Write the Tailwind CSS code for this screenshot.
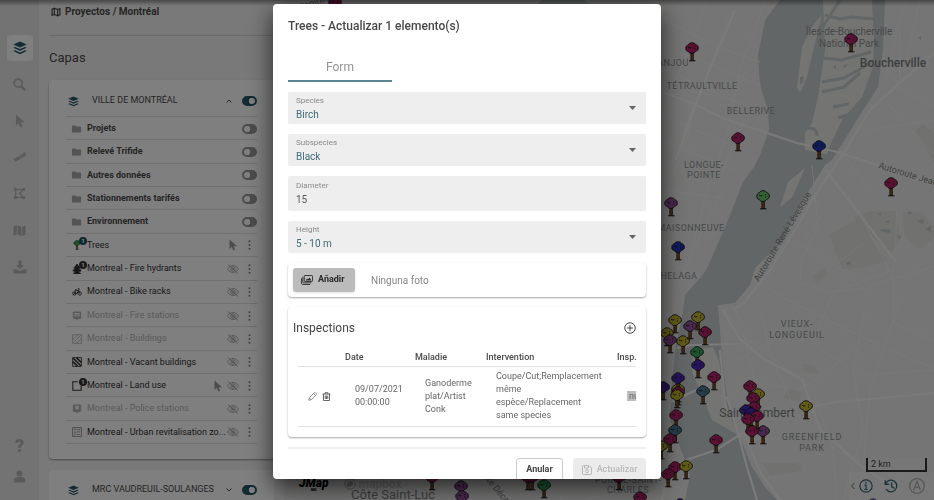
<!DOCTYPE html>
<html lang="es">
<head>
  <meta charset="UTF-8" />
  <meta name="viewport" content="width=device-width, initial-scale=1.0" />
  <title>Proyectos / Montréal</title>
  <script src="https://cdn.jsdelivr.net/npm/@tailwindcss/browser@4"></script>
</head>
<body class="relative flex h-screen overflow-hidden bg-[#eeeeee] font-['Roboto',sans-serif] text-[#4a4a4a]">

  <!-- icon sprite -->
  <svg class="hidden" aria-hidden="true">
    <symbol id="layers" viewBox="0 0 24 24"><path fill="currentColor" d="M12 1l11.500 5L12 11 .5 6zM3.500 10.200l8.500 3.700 8.500-3.700 3 1.400L12 16.700.5 11.600zM3.500 15.800l8.500 3.700 8.500-3.700 3 1.400L12 22.500.5 17.200z"/></symbol>
    <symbol id="search" viewBox="0 0 24 24"><circle cx="9.500" cy="9.500" r="7.500" fill="none" stroke="currentColor" stroke-width="3"/><path d="M15 15l7.500 7.500" stroke="currentColor" stroke-width="4"/></symbol>
    <symbol id="cursor" viewBox="0 0 24 24"><path fill="currentColor" d="M5 1v19l4.600-4.300L12.800 23l3.500-1.500-3.100-7.200H20z"/></symbol>
    <symbol id="ruler" viewBox="0 0 24 24"><path fill="currentColor" d="M1 15l2.500-1.400 1.500 2.700 1.400-.8L5 12.800l2.200-1.300 1 1.800 1.400-.8-1-1.800 2.200-1.300 1.500 2.700 1.400-.8-1.500-2.700 2.200-1.300 1 1.800 1.400-.8-1-1.800L20 4l3 5.200L4 20.200z"/></symbol>
    <symbol id="polygon" viewBox="0 0 24 24"><path fill="none" stroke="currentColor" stroke-width="2.200" d="M5 5h14l-6.500 7L19 19H5z"/><path fill="currentColor" d="M2 2h5v5H2zM17 2h5v5h-5zM2 17h5v5H2zM17 17h5v5h-5z"/></symbol>
    <symbol id="map" viewBox="0 0 24 24"><path fill="currentColor" d="M1 5l6-2.500v17L1 22zM8.500 2.500l7 2.500v17l-7-2.500zM17 5l6-2.500v17L17 22z"/></symbol>
    <symbol id="map-outline" viewBox="0 0 24 24"><path fill="none" stroke="currentColor" stroke-width="3" d="M2.500 5L8 3l8 3 5.500-2.200V19L16 21l-8-3-5.500 2.200zM8 3v15M16 6v15"/></symbol>
    <symbol id="download" viewBox="0 0 24 24"><path fill="currentColor" d="M9.500 1h5v8H19l-7 7-7-7h4.500zM1 16h6l3.500 3h3l3.500-3h6v7H1z"/></symbol>
    <symbol id="user" viewBox="0 0 24 24"><circle cx="12" cy="6.500" r="5.500" fill="currentColor"/><path fill="currentColor" d="M1.500 23v-3.500c0-4 3-6.500 6.500-6.500h8c3.500 0 6.500 2.500 6.500 6.500V23z"/></symbol>
    <symbol id="folder" viewBox="0 0 24 20"><path fill="currentColor" d="M2 1h7l3 3h10a1.500 1.500 0 0 1 1.500 1.500v12A1.500 1.500 0 0 1 22 19H2a1.500 1.500 0 0 1-1.500-1.500v-15A1.500 1.500 0 0 1 2 1z"/></symbol>
    <symbol id="eye-off" viewBox="0 0 24 20"><g fill="none" stroke="currentColor" stroke-width="1.500"><path d="M1 10c3-5 7-7 11-7s8 2 11 7c-3 5-7 7-11 7S4 15 1 10z"/><circle cx="12" cy="10" r="4.500"/><circle cx="12" cy="10" r="1.500"/><path d="M2 1l20 18"/></g></symbol>
    <symbol id="dots" viewBox="0 0 6 24"><g fill="currentColor"><circle cx="3" cy="3" r="2.400"/><circle cx="3" cy="12" r="2.400"/><circle cx="3" cy="21" r="2.400"/></g></symbol>
    <symbol id="hydrant" viewBox="0 0 24 24"><path fill="currentColor" d="M10 0h4v3c3 1 4 3 4 5h2v3h-2v2h4v5h-4v3h3v3H3v-3h3v-3H2v-5h4v-2H4V8h2c0-2 1-4 4-5z"/></symbol>
    <symbol id="bike" viewBox="0 0 24 20"><g fill="none" stroke="currentColor" stroke-width="2.200"><circle cx="5.500" cy="13.500" r="4"/><circle cx="18.500" cy="13.500" r="4"/><path d="M5.500 13.500L9 6h7l-4 7.500zM16 6l2.500 7.500M14.500 2H17l-1 4M7 4.500h4"/></g></symbol>
    <symbol id="station" viewBox="0 0 24 24"><path fill="currentColor" d="M4 1h16a2 2 0 0 1 2 2v14a2 2 0 0 1-2 2h-5l-3 4-3-4H4a2 2 0 0 1-2-2V3a2 2 0 0 1 2-2z"/><path fill="#fff" d="M6 5h12v8H6z"/><path fill="currentColor" d="M9 8h6v3H9z"/></symbol>
    <symbol id="police" viewBox="0 0 24 24"><path fill="currentColor" d="M4 1h16a2 2 0 0 1 2 2v14a2 2 0 0 1-2 2h-5l-3 4-3-4H4a2 2 0 0 1-2-2V3a2 2 0 0 1 2-2z"/><path fill="#fff" d="M8 4h8v7l-4 3-4-3z"/></symbol>
    <symbol id="hatch" viewBox="0 0 24 24"><path fill="none" stroke="currentColor" stroke-width="2" d="M1.500 1.500h21v21h-21zM2 14L14 2M4 20L20 4M11 22L22 11"/></symbol>
    <symbol id="hatch-bold" viewBox="0 0 24 24"><path fill="none" stroke="currentColor" stroke-width="2" d="M1.500 1.500h21v21h-21z"/><path fill="none" stroke="currentColor" stroke-width="4" d="M11 2l11 11M3 3l18 18M2 11l11 11"/></symbol>
    <symbol id="square" viewBox="0 0 24 24"><path fill="none" stroke="currentColor" stroke-width="2.500" d="M14 2H2v20h20V12"/></symbol>
    <symbol id="zone" viewBox="0 0 24 24"><g opacity=".6"><path fill="none" stroke="currentColor" stroke-width="2" d="M1.500 1.500h21v21h-21z"/><path fill="none" stroke="currentColor" stroke-width="1.500" d="M5 6h6M13 6h6M5 10h3M11 10h8M5 14h8M16 14h3M5 18h4M12 18h7"/></g></symbol>
    <symbol id="chevron-up" viewBox="0 0 12 8"><path fill="none" stroke="currentColor" stroke-width="2" d="M1 7l5-5 5 5"/></symbol>
    <symbol id="chevron-down" viewBox="0 0 12 8"><path fill="none" stroke="currentColor" stroke-width="2" d="M1 1l5 5 5-5"/></symbol>
    <symbol id="tree" viewBox="0 0 14 20">
      <path fill="#8a5220" stroke="#1a1a1a" stroke-width=".7" d="M5.800 10h2.600v8.500H5.800z"/>
      <path stroke="#1a1a1a" d="M4 18.800h6.500"/>
      <path fill="currentColor" stroke="#1a1a1a" stroke-width=".9" d="M7 .8c2 0 3.300.8 3.900 1.900 1.500.3 2.600 1.700 2.400 3.300.2 1.800-.9 2.900-2.400 3.100-1 1.800-2.600 2.500-4 2.400-1.600 0-3-.6-3.600-2C1.600 9.300.6 8 .8 6.200c-.1-1.700.9-3 2.400-3.300C4 1.400 5.300.8 7 .8z"/>
      <path fill="none" stroke="#1a1a1a" stroke-width=".9" d="M3 5l1.800 1 1.500-.5M9 5l1.200-.8M9.600 6.300v1.200"/>
    </symbol>
  </svg>

  <!-- sidebar -->
  <nav class="flex w-[39px] shrink-0 flex-col items-center justify-between bg-[#e6e6e6] pt-[30px] pb-2 text-[#b4b4b4]">
    <div class="flex h-[255px] flex-col">
      <button aria-label="Capas" class="flex flex-1 items-center justify-center"><span class="flex size-[26px] items-center justify-center rounded bg-white text-[#265868]"><svg class="size-[14px]"><use href="#layers"/></svg></span></button>
      <button aria-label="Buscar" class="flex flex-1 items-center justify-center"><svg class="size-[13px]"><use href="#search"/></svg></button>
      <button aria-label="Seleccionar" class="flex flex-1 items-center justify-center"><svg class="size-[14px]"><use href="#cursor"/></svg></button>
      <button aria-label="Medir" class="flex flex-1 items-center justify-center"><svg class="size-[14px]"><use href="#ruler"/></svg></button>
      <button aria-label="Anotar" class="flex flex-1 items-center justify-center"><svg class="size-[13px]"><use href="#polygon"/></svg></button>
      <button aria-label="Mapa base" class="flex flex-1 items-center justify-center"><svg class="size-[13px]"><use href="#map"/></svg></button>
      <button aria-label="Descargar" class="flex flex-1 items-center justify-center"><svg class="size-[14px]"><use href="#download"/></svg></button>
    </div>
    <div class="flex flex-col">
      <button aria-label="Ayuda" class="h-[31px] text-lg font-black">?</button>
      <button aria-label="Usuario" class="flex h-[31px] items-center justify-center"><svg class="size-[13px]"><use href="#user"/></svg></button>
    </div>
  </nav>

  <!-- layers panel -->
  <section class="flex w-[245px] shrink-0 flex-col overflow-hidden bg-[#f3f3f3] px-[10px]">
    <header class="flex h-9 shrink-0 items-start gap-1 border-b border-[#d2d2d2] pt-1 pl-[2px]">
      <svg class="mt-[3px] size-[10px]"><use href="#map-outline"/></svg>
      <h1 class="text-[10px] leading-4 font-bold">Proyectos / Montréal</h1>
    </header>
    <h2 class="flex h-11 shrink-0 items-center text-[13px]">Capas</h2>

    <article class="shrink-0 rounded bg-white px-[17px] pb-[15px] shadow-[0_1px_2px_rgba(0,0,0,0.4)]">
      <div class="flex h-[37px] items-center border-b border-[#dedede] pt-[6px] pl-[2px]">
        <svg class="size-[11px] text-[#265868]"><use href="#layers"/></svg>
        <h3 class="ml-[13px] flex-1 text-[9px]">VILLE DE MONTRÉAL</h3>
        <button aria-label="Contraer" class="mr-[10px]"><svg class="h-1 w-[6px]"><use href="#chevron-up"/></svg></button>
        <input type="checkbox" checked aria-label="Ville de Montréal" class="h-[10px] w-[15px] appearance-none rounded-full border-2 border-[#265868] bg-[radial-gradient(circle_at_8px_3px,#fff_3px,#265868_3px)]" />
      </div>
      <ul id="layers-list" class="flex h-[327px] flex-col text-[9px]"></ul>
    </article>

    <article class="mt-[11px] h-20 shrink-0 rounded bg-white px-[17px]">
      <div class="flex h-10 items-center pl-[2px]">
        <svg class="size-[11px] text-[#265868]"><use href="#layers"/></svg>
        <h3 class="ml-[13px] flex-1 text-[9px] whitespace-nowrap">MRC VAUDREUIL-SOULANGES</h3>
        <button aria-label="Expandir" class="mr-[10px]"><svg class="h-1 w-[6px]"><use href="#chevron-down"/></svg></button>
        <input type="checkbox" checked aria-label="MRC Vaudreuil-Soulanges" class="h-[10px] w-[15px] appearance-none rounded-full border-2 border-[#265868] bg-[radial-gradient(circle_at_8px_3px,#fff_3px,#265868_3px)]" />
      </div>
    </article>
  </section>

  <!-- map -->
  <main class="relative flex-1 overflow-hidden bg-[#ebebea]">
    <svg class="h-full w-full" viewBox="284 0 650 500" preserveAspectRatio="xMinYMin slice">
      <!-- parks and blocks -->
      <g fill="#e2e2e1">
        <path d="M829 235l28-16 31 42-22 6-24 2z"/>
        <path d="M854 217l15-6h27l4 25-8 17-34-28z"/>
        <path d="M903 212h18l13 14v12l-14 12-16-14z"/>
        <path d="M915 130l8-6 11 9v30z"/>
        <path d="M762 463h36l4 8-32 5z"/>
        <path d="M803 364l12 2 3 8-14-2zM783 398l7-12 12 6-4 10zM812 277l12-9 4 6-11 10z"/>
      </g>
      <!-- river -->
      <path fill="#c4cccc" d="M780 0l-15 20-7 35 2 30 8 25 1 20-9 25-6 12-11 15-13 33-20 47-5 10-20 23-2 17-7 33-4 35-2 40 13 35 7 20-5 25h92l-12-13-13-20-14-34-11-36-5-40-4-52 17-2 15-18 5-17 27-26 16-34 27-43 7-5 23-37 23-36 5-37 2-50z"/>
      <path fill="#c4cccc" d="M538 4h52l-14-8h-30z"/>
      <!-- islands -->
      <g fill="#e8e8e7">
        <path d="M823 0h49l2 40-1 27-11 30-20 23-14 30-1 4-22-4V133l7-10 6-26 7-47z"/>
        <path d="M822 14l-10 13-10 20-5 40 3 6 7-16 8-34z"/>
        <path d="M805 168l-17 14-8 25 12-9z"/>
        <path d="M693 350l-1 22 11 26 9 22 26 15-13-34-6-40-6-14z"/>
      </g>
      <g fill="none" stroke="#c4cccc" stroke-width="3">
        <path d="M825 15l15 4 12-2 22 2M823 58l18 2 30-8M822 82l22-4 18-10 12-8M822 92l22-5 16-14M833 107l16-3M838 118l10-3M808 128q10 0 9 8M840 0l-18 28"/>
      </g>
      <g fill="#c4cccc"><path d="M800 77l4-1-1 6-3 3zM918 38l3-2v4zM846 263l4-2 1 3-4 1zM878 214l3-1v3zM885 222l4-2v3zM881 229l10 1-2 3-9-2zM908 211l5 2-4 2zM916 221l8-2-1 5zM925 229l6-3v6zM898 235l3 1-2 5zM833 67l3-2v5zM843 66l5-2-3 4z"/></g>
      <!-- streets -->
      <g fill="none" stroke="#f3f3f2" stroke-width=".8">
        <path d="M662 20l70 32 28 10M662 45l85 35 14 4M662 68l60 28 38 15M662 115l50 22 34 14M662 140l72 30M662 190l62 8M662 215l55 20M662 260l40 18"/>
        <path d="M735 0l-32 85-41 100M708 0l-46 115M765 0l-25 70-12 60-22 65-16 60M690 130l-28 75M744 120l-25 60M722 190l-40 85-16 65M745 72l-20 42"/>
        <path d="M755 280l30 18 40 20 60 30 49 20M790 240l45 25 30 24 22-9 18-4 29-10M826 173l30 35 30 55 8 20v40l40 18M802 262l-2 20 30 10 36-4M897 210l-3 60-60 22-22 50M812 165l6 60-18 38M735 330l40 30 38 30 20 60 4 50M760 310l12 50 28 60 35 30 99 42M790 310l30 40 44 25 70-5M865 310l-12 60 10 60-20 70M900 300l-30 90-10 110M740 380l60 10 70-50M835 265l28-22M805 240l20-30M885 100l49 55M868 130l66-10M840 150l30 40M878 60l25 30 31 16M900 30v60M885 80l15-60 8-20M915 20l-10 50 29-18M920 0l-5 22"/>
        <path d="M725 310l18 24 12 48M732 305l16 28M722 345l42-3M738 360l22-12M745 440l34-2M760 430l30-30"/>
        <path d="M284 490l60-8 90 14 100-14 120 12M300 500l20-20M390 500l30-20M500 500l30-20M560 500l20-20M590 500l22-20M649 500l12-18"/>
      </g>
      <g fill="none" stroke="#f5f5f4" stroke-width="2.200">
        <path d="M662 92l28 10 35 17 72 24 45 10 92 32"/>
        <path d="M934 53l-30 26-34 31-22 36-36 54-14 25-28 45-27 34-10 6"/>
        <path d="M735 10l-34 80-25 70"/>
        <path d="M826 170l70 92M722 309l18 30 24 20 38 20 18 50 40 36 40 27M806 408l30-6 98-9"/>
        <path d="M677 348l14-3 47-1M671 402l42-20M686 460l30-10 28-18M727 397l12 40 8 30 10 33M720 350l6 60M744 432l16 40 20 28M676 460q-10 20-14 40"/>
      </g>

      <!-- place names -->
      <g class="font-['Roboto',sans-serif]" text-anchor="middle" fill="#8d9292">
        <g class="text-[10px]">
          <text x="849" y="35">Îles-de-Boucherville</text>
          <text x="849" y="47">National Park</text>
        </g>
        <g class="text-[9px] tracking-wider">
          <text x="673" y="66">ANJOU</text>
          <text x="702" y="89">TÉTRAULTVILLE</text>
          <text x="751" y="114">BELLERIVE</text>
          <text x="704" y="168">LONGUE-</text>
          <text x="704" y="178">POINTE</text>
          <text x="691" y="231">MAISONNEUVE</text>
          <text x="669" y="279">HOCHELAGA</text>
          <text x="628" y="483">POINTE-SAINT-</text>
          <text x="628" y="493">CHARLES</text>
        </g>
        <g class="text-[9px] tracking-widest">
          <text x="797" y="327">VIEUX-</text>
          <text x="797" y="338">LONGUEUIL</text>
          <text x="812" y="440">GREENFIELD</text>
          <text x="812" y="451">PARK</text>
        </g>
        <g class="text-[12px]" fill="#7a7d7d">
          <text x="893" y="67" class="font-medium">Boucherville</text>
          <text x="757" y="417">Saint-Lambert</text>
          <text x="393" y="499" class="text-[13px]">Côte Saint-Luc</text>
        </g>
        <g class="text-[9px]" fill="#808080">
          <text transform="translate(785 238) rotate(-59)">Autoroute René-Lévesque</text>
          <text text-anchor="start" transform="translate(878 168) rotate(17)">Autoroute Jean</text>
          <text transform="translate(494 490) rotate(50)">Route Décarie</text>
          <text transform="translate(318 4) rotate(-20)">Papineau</text>
        </g>
      </g>

      <!-- trees, grouped by state -->
      <g class="text-[#b52269]">
        <use href="#tree" x="328" y="-4" width="14" height="20"/>
        <use href="#tree" x="685" y="42" width="14" height="20"/>
        <use href="#tree" x="844" y="33" width="14" height="20"/>
        <use href="#tree" x="731" y="132" width="14" height="20"/>
        <use href="#tree" x="884" y="177" width="14" height="20"/>
        <use href="#tree" x="698" y="326" width="14" height="20"/>
        <use href="#tree" x="707" y="371" width="14" height="20"/>
        <use href="#tree" x="669" y="409" width="14" height="20"/>
        <use href="#tree" x="709" y="434" width="14" height="20"/>
        <use href="#tree" x="668" y="461" width="14" height="20"/>
        <use href="#tree" x="661" y="468" width="14" height="20"/>
        <use href="#tree" x="425" y="471" width="14" height="20"/>
        <use href="#tree" x="521" y="471" width="14" height="20"/>
        <use href="#tree" x="525" y="471" width="14" height="20"/>
        <use href="#tree" x="612" y="471" width="14" height="20"/>
        <use href="#tree" x="633" y="491" width="14" height="20"/>
        <use href="#tree" x="743" y="380" width="14" height="20"/>
      </g>
      <g class="text-[#c4b52e]">
        <use href="#tree" x="691" y="311" width="14" height="20"/>
        <use href="#tree" x="668" y="314" width="14" height="20"/>
        <use href="#tree" x="660" y="327" width="14" height="20"/>
        <use href="#tree" x="676" y="335" width="14" height="20"/>
        <use href="#tree" x="671" y="383" width="14" height="20"/>
        <use href="#tree" x="654" y="440" width="14" height="20"/>
        <use href="#tree" x="679" y="460" width="14" height="20"/>
        <use href="#tree" x="751" y="388" width="14" height="20"/>
        <use href="#tree" x="799" y="400" width="14" height="20"/>
      </g>
      <g class="text-[#96509c]">
        <use href="#tree" x="664" y="197" width="14" height="20"/>
        <use href="#tree" x="683" y="320" width="14" height="20"/>
        <use href="#tree" x="663" y="334" width="14" height="20"/>
        <use href="#tree" x="454" y="480" width="14" height="20"/>
        <use href="#tree" x="455" y="490" width="14" height="20"/>
        <use href="#tree" x="756" y="425" width="14" height="20"/>
      </g>
      <g class="text-[#2237b4]">
        <use href="#tree" x="812" y="140" width="14" height="20"/>
        <use href="#tree" x="671" y="241" width="14" height="20"/>
      </g>
      <use class="text-[#68c266]" href="#tree" x="756" y="190" width="14" height="20"/>
      <use class="text-[#36a858]" href="#tree" x="690" y="346" width="14" height="20"/>
      <use class="text-[#36a858]" href="#tree" x="537" y="479" width="14" height="20"/>
      <g class="text-[#4c28b8]">
        <use href="#tree" x="691" y="359" width="14" height="20"/>
        <use href="#tree" x="671" y="372" width="14" height="20"/>
        <use href="#tree" x="656" y="381" width="14" height="20"/>
        <use href="#tree" x="673" y="498" width="14" height="20"/>
        <use href="#tree" x="866" y="498" width="14" height="20"/>
      </g>
      <g class="text-[#4b7c94]">
        <use href="#tree" x="696" y="385" width="14" height="20"/>
        <use href="#tree" x="668" y="424" width="14" height="20"/>
      </g>
      <!-- crowded spots, back to front -->
      <use class="text-[#b52269]" href="#tree" x="663" y="433" width="14" height="20"/>
      <use class="text-[#b52269]" href="#tree" x="671" y="386" width="14" height="20"/>
      <use class="text-[#c4b52e]" href="#tree" x="670" y="389" width="14" height="20"/>
      <use class="text-[#b52269]" href="#tree" x="746" y="392" width="14" height="20"/>
      <use class="text-[#b52269]" href="#tree" x="747" y="401" width="14" height="20"/>
      <use class="text-[#4c28b8]" href="#tree" x="739" y="404" width="14" height="20"/>
      <use class="text-[#4c28b8]" href="#tree" x="744" y="407" width="14" height="20"/>
      <use class="text-[#b52269]" href="#tree" x="750" y="410" width="14" height="20"/>
      <use class="text-[#b52269]" href="#tree" x="741" y="413" width="14" height="20"/>
      <use class="text-[#b52269]" href="#tree" x="745" y="425" width="14" height="20"/>
    </svg>

    <div class="absolute bottom-2 left-[15px] flex items-start gap-4">
      <span class="flex flex-col items-center text-[12px] leading-[10px] font-black text-black italic">JMap<span class="text-[4px] leading-[4px] not-italic">NG</span></span>
      <span class="flex items-center gap-[2px] text-[12px] leading-[10px] font-bold text-[#c8c8c8]">
        <svg class="size-3" viewBox="0 0 24 24"><circle cx="12" cy="12" r="10.500" fill="none" stroke="#a8a8a8" stroke-width="2"/><path fill="#a8a8a8" d="M6 18c-1-8 3-12 7-12a5 5 0 0 1 5 5c0 5-5 8-12 7z"/></svg>mapbox
      </span>
    </div>
    <div class="absolute right-[7px] bottom-7 h-[14px] w-[61px] border-2 border-t-0 border-[#333333] bg-white/20 pl-[3px] text-[9px] leading-3 text-[#444444]">2 km</div>
    <div class="absolute right-0 bottom-0 flex h-7 w-[85px] items-center justify-between bg-white/30 pr-[9px] pl-[2px] text-[#336676]">
      <button aria-label="Más" class="flex h-full items-center"><svg class="h-2 w-1" viewBox="0 0 8 16"><path fill="none" stroke="#666" stroke-width="2" d="M7 2L1 8l6 6"/></svg></button>
      <div class="flex items-center gap-[11px]">
        <button aria-label="Información"><svg class="size-[14px]" viewBox="0 0 24 24"><g fill="none" stroke="currentColor" stroke-width="2"><circle cx="12" cy="12" r="10.500"/><path d="M9.500 10.500H12V18M9 18h6"/></g><circle cx="12" cy="6.500" r="1.500" fill="currentColor"/></svg></button>
        <button aria-label="Historial"><svg class="size-[14px]" viewBox="0 0 24 24"><g fill="none" stroke="currentColor" stroke-width="2.200"><path d="M2 2v7h7M2.500 8.500a10 10 0 1 1 1 9M13 6v7l5 3"/></g></svg></button>
        <button aria-label="Norte" class="text-[#b0b0b0]"><svg class="size-4" viewBox="0 0 24 24"><g fill="none" stroke="currentColor" stroke-width="2"><circle cx="12" cy="12" r="11"/><path d="M7 18l5-13 5 13M8.500 14h7"/></g></svg></button>
      </div>
    </div>
  </main>

  <div class="absolute inset-x-0 top-0 h-[6px] bg-linear-to-b from-black/40 to-transparent"></div>

  <!-- dialog -->
  <div class="fixed inset-0 flex items-start justify-center bg-black/50 pt-1">
    <div role="dialog" aria-labelledby="dialog-title" class="max-h-[95vh] w-full max-w-[388px] overflow-hidden rounded bg-white px-[15px] pb-4 shadow-[0_8px_24px_rgba(0,0,0,0.7)]">
      <h2 id="dialog-title" class="pt-[13px] text-[12px] leading-[18px] font-medium text-[#484848]">Trees - Actualizar 1 elemento(s)</h2>
      <button role="tab" aria-selected="true" class="mt-[19px] block h-7 w-[104px] border-b-2 border-[#5b8792] text-[12px] text-[#939393]">Form</button>

      <form class="mt-[10px] flex flex-col gap-[10px]">
        <div class="relative h-8 rounded-xs bg-[#eeeeee]">
          <label for="species" class="absolute top-1 left-2 text-[8px] leading-[10px] text-[#8a8a8a]">Species</label>
          <select id="species" class="h-full w-full appearance-none pt-[13px] pl-2 text-[10px] text-[#3f6b78]"><option>Birch</option></select>
          <svg class="pointer-events-none absolute top-[14px] right-[10px] h-1 w-[7px] text-[#666666]" viewBox="0 0 14 8"><path fill="currentColor" d="M0 0h14L7 8z"/></svg>
        </div>
        <div class="relative h-8 rounded-xs bg-[#eeeeee]">
          <label for="subspecies" class="absolute top-1 left-2 text-[8px] leading-[10px] text-[#8a8a8a]">Subspecies</label>
          <select id="subspecies" class="h-full w-full appearance-none pt-[13px] pl-2 text-[10px] text-[#3f6b78]"><option>Black</option></select>
          <svg class="pointer-events-none absolute top-[14px] right-[10px] h-1 w-[7px] text-[#666666]" viewBox="0 0 14 8"><path fill="currentColor" d="M0 0h14L7 8z"/></svg>
        </div>
        <div class="relative h-[35px] rounded-xs bg-[#eeeeee]">
          <label for="diameter" class="absolute top-[5px] left-2 text-[8px] leading-[10px] text-[#8a8a8a]">Diameter</label>
          <input id="diameter" type="text" value="15" class="h-full w-full pt-3 pl-2 text-[10px] text-[#555555]" />
        </div>
        <div class="relative h-8 rounded-xs bg-[#eeeeee]">
          <label for="height" class="absolute top-1 left-2 text-[8px] leading-[10px] text-[#8a8a8a]">Height</label>
          <select id="height" class="h-full w-full appearance-none pt-[13px] pl-2 text-[10px] text-[#3f6b78]"><option>5 - 10 m</option></select>
          <svg class="pointer-events-none absolute top-[14px] right-[10px] h-1 w-[7px] text-[#666666]" viewBox="0 0 14 8"><path fill="currentColor" d="M0 0h14L7 8z"/></svg>
        </div>

        <div class="flex h-[34px] items-center gap-4 rounded px-[5px] shadow-[0_1px_2px_rgba(0,0,0,0.35)]">
          <button type="button" class="flex h-6 w-[62px] items-center gap-[5px] rounded-[3px] bg-[#bbbbbb] pl-2 text-[9px] font-bold text-[#2a2a2a] shadow">
            <svg class="h-[10px] w-3" viewBox="0 0 24 20"><g fill="none" stroke="currentColor" stroke-width="1.800"><rect x="6.500" y="1" width="16.500" height="12" rx="1.500"/><path d="M3.700 3.500V14q0 1.800 1.800 1.800h15M1 6.500v10q0 2.500 2.500 2.500H18"/></g><path fill="currentColor" d="M9 11l3-4 2 2 3-4 4 6z"/></svg>
            Añadir
          </button>
          <span class="text-[10px] text-[#858585]">Ninguna foto</span>
        </div>

        <section class="rounded px-[5px] pb-[10px] shadow-[0_1px_2px_rgba(0,0,0,0.35)]">
          <div class="flex h-[42px] items-center justify-between pr-[5px]">
            <h3 class="text-[12px] text-[#444444]">Inspections</h3>
            <button type="button" aria-label="Añadir inspección"><svg class="size-3 text-[#444444]" viewBox="0 0 24 24"><g fill="none" stroke="currentColor" stroke-width="2"><circle cx="12" cy="12" r="10.500"/><path d="M12 6v12M6 12h12"/></g></svg></button>
          </div>
          <div class="mx-[5px] overflow-hidden">
            <table class="w-[400px] table-fixed text-left text-[9px] leading-[13px] text-[#666666]">
              <thead>
                <tr class="h-[17px] border-b border-[#e0e0e0] text-[#4a4a4a]">
                  <th class="w-[47px]"></th>
                  <th class="w-[70px] font-medium">Date</th>
                  <th class="w-[71px] font-medium">Maladie</th>
                  <th class="w-[131px] font-medium">Intervention</th>
                  <th class="font-medium">Insp.</th>
                </tr>
              </thead>
              <tbody>
                <tr class="h-[60px] border-b border-[#e0e0e0]">
                  <td class="pl-[10px]">
                    <span class="flex gap-[5px]">
                      <button type="button" aria-label="Editar"><svg class="size-[9px]" viewBox="0 0 18 18"><g fill="none" stroke="#666" stroke-width="1.400"><path d="M1.500 16.500l1-5L12.500 1.500q1.300-1 2.500 0l1.500 1.500q1 1.200 0 2.500L6.500 15.500zM11 3l4 4M2.500 11.500l4 4"/></g></svg></button>
                      <button type="button" aria-label="Eliminar"><svg class="size-[9px]" viewBox="0 0 18 18"><g fill="none" stroke="#444" stroke-width="1.600"><path d="M1 4h16M6 4V1.500h6V4M3 4v13h12V4M6.500 7v7M9 7v7M11.500 7v7"/></g></svg></button>
                    </span>
                  </td>
                  <td class="pl-[10px]">09/07/2021 00:00:00</td>
                  <td class="pl-[10px]">Ganoderme plat/Artist Conk</td>
                  <td class="pr-3 pl-[10px]">Coupe/Cut;Remplacement même espèce/Replacement same species</td>
                  <td class="pl-[10px]"><span class="bg-[#bdbdbd] pl-[2px]">null</span></td>
                </tr>
              </tbody>
            </table>
          </div>
        </section>

        <div class="flex justify-end gap-[10px] border-t-2 border-[#eeeeee] pt-[9px]">
          <button type="button" class="h-6 w-[47px] rounded-[3px] border border-[#cccccc] text-[9px] font-bold text-[#444444]">Anular</button>
          <button type="submit" disabled class="flex h-6 w-[73px] items-center justify-center gap-[5px] rounded-[3px] bg-[#ebebeb] text-[9px] font-medium text-[#b8b8b8]">
            <svg class="size-[10px]" viewBox="0 0 20 20"><g fill="none" stroke="currentColor" stroke-width="2"><path d="M1 3q0-2 2-2h11l5 5v11q0 2-2 2H3q-2 0-2-2zM5 1v5h8V1"/><circle cx="10" cy="12.500" r="3"/></g></svg>
            Actualizar
          </button>
        </div>
      </form>
    </div>
  </div>

  <script>
    const layers = [
      { name: "Projets", group: true },
      { name: "Relevé Trifide", group: true },
      { name: "Autres données", group: true },
      { name: "Stationnements tarifés", group: true },
      { name: "Environnement", group: true },
      { name: "Trees", icon: "tree", badge: "bg-[#1f5265]", visible: true, select: true },
      { name: "Montreal - Fire hydrants", icon: "hydrant", badge: "bg-[#333333]" },
      { name: "Montreal - Bike racks", icon: "bike" },
      { name: "Montreal - Fire stations", icon: "station", off: true },
      { name: "Montreal - Buildings", icon: "hatch", off: true },
      { name: "Montreal - Vacant buildings", icon: "hatch-bold" },
      { name: "Montreal - Land use", icon: "square", badge: "bg-[#333333]", select: true },
      { name: "Montreal - Police stations", icon: "police", off: true },
      { name: "Montreal - Urban revitalisation zo...", icon: "zone" },
    ];

    function groupRow(l) {
      return `<li class="flex flex-1 items-center border-b border-[#dedede] pt-px pl-[5px] font-bold">
        <svg class="h-2 w-[11px] text-[#a8a8a8]"><use href="#folder"/></svg>
        <span class="ml-[5px] flex-1">${l.name}</span>
        <input type="checkbox" aria-label="${l.name}" class="h-[10px] w-[15px] appearance-none rounded-full border-2 border-[#999999] bg-[radial-gradient(circle_at_3px_3px,#fff_3px,#999999_3px)]" />
      </li>`;
    }

    function layerRow(l) {
      const badge = l.badge ? `<span class="absolute -top-[3px] left-2 flex size-2 items-center justify-center rounded-full text-[6px] leading-none font-bold text-white ${l.badge}">1</span>` : "";
      const select = l.select ? `<button aria-label="Seleccionar"><svg class="size-3 text-[#999999]"><use href="#cursor"/></svg></button>` : "";
      const eye = l.visible ? "" : `<button aria-label="Mostrar" class="ml-[3px]"><svg class="h-[10px] w-3 text-[#999999]"><use href="#eye-off"/></svg></button>`;
      return `<li class="flex min-w-0 flex-1 items-center border-b border-[#dedede] pt-px pr-[6px] pl-[5px] ${l.off ? "text-[#b4b4b4]" : "text-[#303030]"}">
        <span class="relative flex w-[11px] shrink-0 justify-center"><svg class="size-[10px] ${l.icon === "tree" ? "text-[#34b04e]" : ""}"><use href="#${l.icon}"/></svg>${badge}</span>
        <span class="ml-[5px] min-w-0 flex-1 whitespace-nowrap">${l.name}</span>
        ${select}${eye}
        <button aria-label="Opciones" class="ml-[9px]"><svg class="h-[10px] w-[3px] text-[#808080]"><use href="#dots"/></svg></button>
      </li>`;
    }

    document.getElementById("layers-list").innerHTML = layers.map(l => l.group ? groupRow(l) : layerRow(l)).join("");
  </script>
</body>
</html>
